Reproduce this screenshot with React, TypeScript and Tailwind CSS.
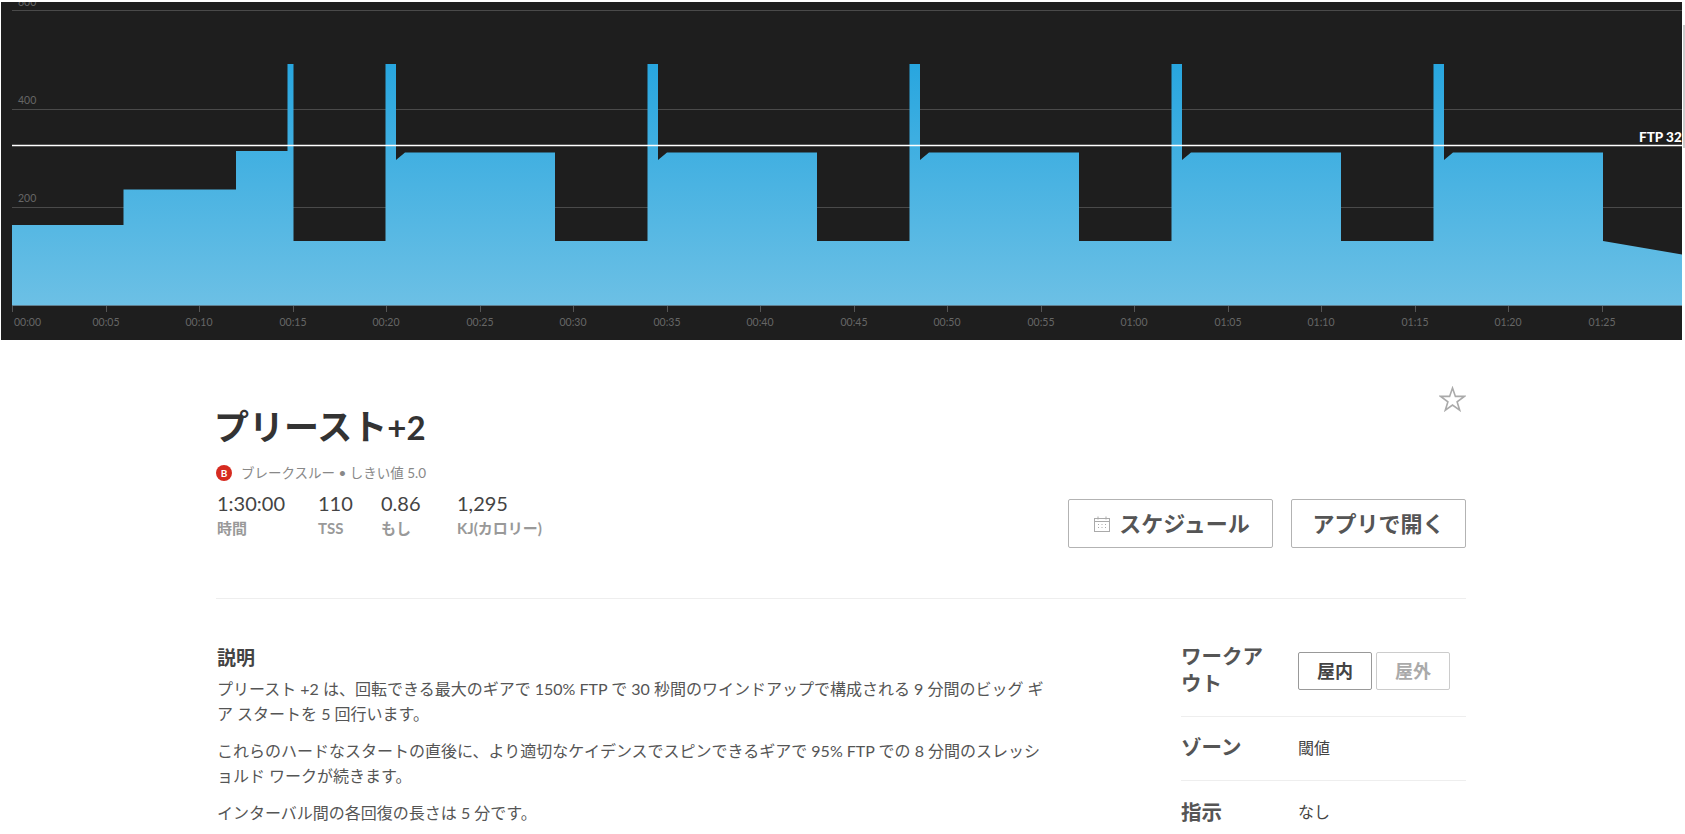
const ticks = ['00:00', '00:05', '00:10', '00:15', '00:20', '00:25', '00:30', '00:35', '00:40', '00:45', '00:50', '00:55', '01:00', '01:05', '01:10', '01:15', '01:20', '01:25'];

// spike + threshold block, repeated five times
const period = 262;
const blocks = [0, 1, 2, 3, 4]
  .map((i) => {
    const o = i * period;
    return `L${385.5 + o} 241 L${385.5 + o} 64 L${396 + o} 64 L${396 + o} 160 L${405 + o} 152.5 L${555 + o} 152.5 L${555 + o} 241`;
  })
  .join(' ');
const areaPath = `M12 305 L12 225 L123.5 225 L123.5 189.5 L236 189.5 L236 151 L287.5 151 L287.5 64 L293.5 64 L293.5 241 ${blocks} L1682 254.5 L1682 305 Z`;

function WorkoutChart() {
  return (
    <div className="mt-[2px] ml-px h-[338px] w-[1681px] bg-[#1e1e1e]">
      <svg width="1681" height="338" viewBox="1 2 1681 338" className="block">
        <defs>
          <linearGradient id="area" gradientUnits="userSpaceOnUse" x1="0" y1="64" x2="0" y2="305">
            <stop offset="0" stopColor="#28a6df" />
            <stop offset="1" stopColor="#6cc0e5" />
          </linearGradient>
        </defs>
        {[10.5, 109.5, 207.5].map((y) => (
          <line key={y} x1="12" x2="1682" y1={y} y2={y} stroke="#4a4a4a" />
        ))}
        <g fontFamily="Lato, sans-serif" fontSize="10.5" fill="#666">
          <text x="18" y="6">600</text>
          <text x="18" y="104">400</text>
          <text x="18" y="202">200</text>
        </g>
        <path d={areaPath} fill="url(#area)" />
        <line x1="12" x2="1682" y1="305.5" y2="305.5" stroke="#5f7f90" />
        <line x1="12" x2="1682" y1="145.5" y2="145.5" stroke="#fff" strokeWidth="1.5" />
        {ticks.map((t, i) => {
          const x = Math.round(12 + i * 93.5);
          return (
            <g key={t}>
              <line x1={x + 0.5} x2={x + 0.5} y1="306" y2="312" stroke="#555" />
              <text x={i === 0 ? 14 : x} y="326" textAnchor={i === 0 ? 'start' : 'middle'} fontFamily="Lato, sans-serif" fontSize="10.5" fill="#666">
                {t}
              </text>
            </g>
          );
        })}
        <text x="1639" y="142" fontFamily="Lato, sans-serif" fontSize="13.5" fontWeight="900" fill="#fff">
          FTP 32
        </text>
      </svg>
    </div>
  );
}

function Stat({ value, label, className }: { value: string; label: string; className: string }) {
  return (
    <div className={className}>
      <div className="text-[20px] leading-[24px] text-[#444]">{value}</div>
      <div className="mt-[1px] text-[15px] leading-[24px] font-bold text-[#999]">{label}</div>
    </div>
  );
}

export default function App() {
  return (
    <div className="relative h-[834px] w-[1685px] overflow-hidden bg-white font-['Lato','Noto_Sans_CJK_JP',sans-serif] text-[#444]">
      <div className="absolute top-[25px] left-[1683px] h-[123px] w-[2px] bg-[#ccc]" />
      <WorkoutChart />
      <div className="ml-[216px] w-[1250px]">
        <div className="relative h-[259px] border-b border-[#eee]">
          <h1 className="-ml-[2px] pt-[62px] text-[35px] leading-[48px] font-bold text-[#333]">
            プリースト<span className="text-[33px]">+2</span>
          </h1>
          <div className="mt-[12px] flex items-center gap-[9px] text-[13.5px] leading-[20px] text-[#888]">
            <span className="flex h-[16px] w-[16px] items-center justify-center rounded-full bg-[#d62b20] text-[10px] font-bold text-white">B</span>
            ブレークスルー • しきい値 5.0
          </div>
          <div className="mt-[8px] flex pl-px">
            <Stat value="1:30:00" label="時間" className="w-[101px]" />
            <Stat value="110" label="TSS" className="w-[63px]" />
            <Stat value="0.86" label="もし" className="w-[76px]" />
            <Stat value="1,295" label="KJ(カロリー)" className="" />
          </div>
          <svg width="27" height="26" viewBox="0 0 27 26" className="absolute top-[46px] right-0" fill="none" stroke="#aaa" strokeWidth="1.6">
            <path d="M13.5 2 L16.4 10.4 L25.3 10.4 L18.1 15.8 L20.7 24.2 L13.5 19.1 L6.3 24.2 L8.9 15.8 L1.7 10.4 L10.6 10.4 Z" />
          </svg>
          <div className="absolute top-[159px] right-0 flex gap-[18px]">
            <button className="flex h-[49px] w-[205px] items-center justify-center gap-[8px] rounded-[2px] border border-[#b3b3b3] pl-[2px] text-[22px] font-bold text-[#555]">
              <svg width="18" height="18" viewBox="0 0 18 18" fill="none" stroke="#aaa">
                <rect x="1.5" y="3.5" width="15" height="13" />
                <path d="M1.5 6.5H16.5M5 1.5V4.5M13 1.5V4.5" />
                <path d="M5 9.5H6M8.5 9.5H9.5M12 9.5H13M5 12.5H6M8.5 12.5H9.5M12 12.5H13" />
              </svg>
              スケジュール
            </button>
            <button className="h-[49px] w-[175px] rounded-[2px] border border-[#b3b3b3] text-[22px] font-bold text-[#555]">アプリで開く</button>
          </div>
        </div>
        <div className="flex">
          <div className="w-[831px] pt-[45px] pl-px">
            <h2 className="text-[19px] leading-[28px] font-bold text-[#444]">説明</h2>
            <p className="mt-[4px] text-[16px] leading-[25px] text-[#555]">
              プリースト +2 は、回転できる最大のギアで 150% FTP で 30 秒間のワインドアップで構成される 9 分間のビッグ ギア スタートを 5 回行います。
            </p>
            <p className="mt-[12px] text-[16px] leading-[25px] text-[#555]">
              これらのハードなスタートの直後に、より適切なケイデンスでスピンできるギアで 95% FTP での 8 分間のスレッショルド ワークが続きます。
            </p>
            <p className="mt-[12px] text-[16px] leading-[25px] text-[#555]">インターバル間の各回復の長さは 5 分です。</p>
          </div>
          <div className="ml-[134px] w-[285px] text-[#555]">
            <div className="flex h-[118px] items-start border-b border-[#eee] pt-[44px]">
              <div className="w-[117px] pr-[20px] text-[20.5px] leading-[27px] font-bold">ワークアウト</div>
              <div className="mt-[9px] flex gap-[4px]">
                <button className="h-[38px] w-[74px] rounded-[2px] border border-[#999] text-[18px] font-bold text-[#444]">屋内</button>
                <button className="h-[38px] w-[74px] rounded-[2px] border border-[#ccc] text-[18px] font-bold text-[#aaa]">屋外</button>
              </div>
            </div>
            <div className="flex h-[64px] items-center border-b border-[#eee] pb-[2px]">
              <div className="w-[117px] text-[20.5px] font-bold">ゾーン</div>
              <div className="text-[16px] text-[#444]">閾値</div>
            </div>
            <div className="flex h-[64px] items-center pb-[2px]">
              <div className="w-[117px] text-[20.5px] font-bold">指示</div>
              <div className="text-[16px] text-[#444]">なし</div>
            </div>
          </div>
        </div>
      </div>
    </div>
  );
}
